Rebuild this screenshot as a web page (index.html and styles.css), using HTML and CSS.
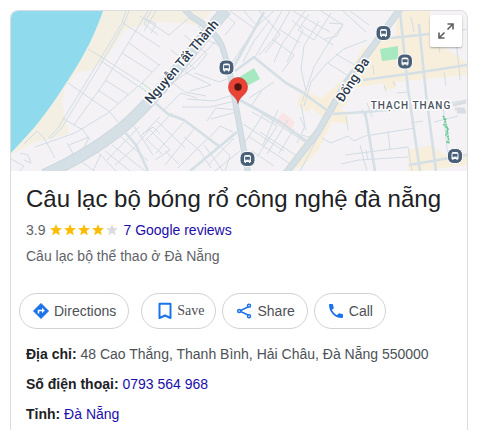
FILE: index.html
```html
<!DOCTYPE html>
<html lang="vi">
<head>
	<meta charset="UTF-8">
	<title>Câu lạc bộ bóng rổ công nghệ đà nẵng</title>
	<link rel="stylesheet" href="styles.css">
</head>
<body>
	<main class="place-card">
		<div class="map">
			<svg class="map-canvas" viewBox="11 11 456 160" preserveAspectRatio="xMidYMid slice" role="img" aria-label="Map">
				<defs>
					<g id="bus">
						<rect x="-7.500" y="-7.500" width="15" height="15" rx="6" fill="#4a6078" stroke="#fff" stroke-width="1"/>
						<path d="M-3.5 3V-2Q-3.5-4-1.5-4H1.5Q3.5-4 3.5-2V3H2.7V4H1.5V3H-1.5V4H-2.7V3Z" fill="#fff"/>
						<path d="M-2.3-2H2.3V.5H-2.3ZM-2.2 1.5h1M1.2 1.5h1" fill="#4a6078" stroke="#4a6078" stroke-width=".4"/>
					</g>
				</defs>
				<rect x="11" y="11" width="456" height="160" fill="#f4f2f4"/>

				<!-- beach and sea -->
				<path d="M103 11H212L199 25L180 23L155 22L125 30L115 45L103 62L92 70L76 73L65 88L62 103L69 134L33 143L11 155Z" fill="#f4efe3"/>
				<path d="M11 11H103C95 34 85 54 72 74C60 93 48 111 33 129L11 153Z" fill="#90daee"/>

				<!-- commercial blocks -->
				<g fill="#f7efdc">
					<path d="M396 11H430V40L461 58L467 64V75L395 82L350 88L348 102L328 119L315 108L303 91L322 98L348 75L362 49L373 43L396 36Z"/>
					<path d="M303 90L346 112L349 124L332 122L318 151L303 166L290 171L288 164L306 139L325 119L300 99Z"/>
					<path d="M408 150L432 145L444 155L467 153V165L420 171H408Z"/>
					<path d="M300 94L310 101V113L297 105ZM383 80L396 78V88L385 90Z"/>
				</g>
				<path d="M283 112L295 122L290 131L276 122Z" fill="#fae4e5"/>
				<path d="M238 78L254 68L260 79L245 87ZM380 49L398 46V59L382 61Z" fill="#a6e8c0"/>

				<!-- side streets -->
				<g fill="none" stroke="#d2dce4" stroke-width="1">
					<path d="M126 11L122 23L99 61L58 128L48 138M129 11L124 24L102 62L61 129L50 139"/>
					<path d="M148 11L122 53L104 83L74 125M88 49L103 58L140 82M101 61L138 86L108 113L75 133L35 147M123 23L160 47M129 43L159 65M122 53L152 72M105 80L129 95M98 90L119 104M68 83L110 112L118 122M62 118L83 130L90 140"/>
					<path d="M160 64L140 85M144 18L156 24L151 33M156 11L144 31M24 144L37 131L44 138L55 158M20 153L28 155L31 163L24 160M11 159L24 166L20 171M67 143L75 157M69 145L89 137L84 148M93 147L116 171M101 154L93 171M105 151L130 171M112 145L145 171M120 136L148 161M134 126L153 155M139 127L107 160M151 128L132 150L115 165M82 162L94 171"/>
					<path d="M140 137L160 117M142 134L153 127L160 134M146 139L162 154M156 120L185 148M149 129L170 150L155 160M165 151L179 164M172 113L145 141M184 122L156 153M194 129L165 165M207 139L178 168M184 137L200 151L211 168M204 145L223 171M219 145L230 156L225 171M233 132L220 126L210 137M234 138L208 165M240 151L215 171"/>
					<path d="M140 16L169 35L190 17M151 11L144 24L158 35M171 50L194 68L175 81M184 35L207 54L194 70M198 25L209 41L223 47M217 40L209 48L185 72L211 85L190 91M163 76L185 92L206 96M195 73L219 82L227 79M187 99L214 101L236 94M182 107L210 107L235 101M207 121L216 108L237 110M211 119L240 111M163 111L181 93L197 98"/>
					<path d="M221 11L235 23L225 35M230 11L255 29L229 67M244 11L257 26L274 11M270 20L254 41L243 62M259 11L280 34L265 53M282 11L255 57M290 11L274 39L259 55M279 29L300 43M272 39L294 55L282 72M292 20L303 30L287 62M305 11L282 44L274 62M319 21L304 46L301 69L306 91"/>
					<path d="M293 11L330 32M301 25L333 45M309 14L298 30L314 40L331 13M321 11L343 25L329 42M329 23L343 24L337 36L325 39M343 11L366 32M350 11L369 25M331 39L314 67L302 102M367 40L344 49L326 64L311 82L304 106M328 63L350 77M336 54L363 70M301 104L305 126L297 143M300 117L306 130M302 135L315 139"/>
					<path d="M249 98L274 82M252 105L262 90M252 112L277 126L257 157M265 112L245 142M278 110L263 145M288 120L267 154M294 129L279 153M243 124L284 151M248 136L289 163M260 132L300 158M252 151L274 166M258 111L305 142"/>
					<path d="M322 138L331 143L348 136L354 141L365 136L415 128M300 171L318 137M348 130L346 116M362 109L366 119M367 103L372 117M374 102L377 112M388 131L390 150M345 155L408 147L412 171M341 164L359 160L408 157M374 75L373 65M411 17L414 32M431 35L467 29M436 34L440 53M455 33L459 67L460 80M444 72L446 86M397 93L408 92M393 81L395 86M384 85L386 91M360 145L367 171M411 123L423 121M434 122L458 116M424 107L467 100M366 150L368 160M443 104L447 149L450 159"/>
					<path d="M457 112H466M455 109H465M453 105L466 102" stroke="#d9dde2" stroke-width="3"/>
				</g>

				<!-- main roads -->
				<g fill="none" stroke="#ccd7df" stroke-linejoin="round">
					<path d="M44 175Q98 150 130 121Q159 93 184 61L226 10" stroke-width="12"/>
					<path d="M286 173L318 132L346 83L401 8" stroke-width="7"/>
					<path d="M184 9L192 17Q213 28 222 46L229 69L235 101L240 129L248 173" stroke-width="6"/>
				</g>
				<g fill="none" stroke="#d5dfe6" stroke-linejoin="round">
					<path d="M44 175Q98 150 130 121Q159 93 184 61L226 10" stroke-width="10"/>
					<path d="M286 173L318 132L346 83L401 8" stroke-width="5"/>
					<path d="M184 9L192 17Q213 28 222 46L229 69L235 101L240 129L248 173" stroke-width="4"/>
					<path d="M123 130L136 145L148 171M153 101L168 114L184 120L196 129L220 147M190 171L237 132M235 71L254 57L266 67L286 83L302 92L332 114L365 112L411 108M238 99L280 122L312 145" stroke-width="2.6"/>
					<path d="M400 11L408 89L420 171M419 24L426 94L436 171M363 80L422 72L467 65M365 111L375 171M391 38L429 34M234 66L264 12M409 165L467 155" stroke-width="2.6"/>
				</g>

				<path d="M142 83L151 90M139 86L148 93" fill="none" stroke="#7bcda3" stroke-dasharray="1 1"/>
				<path d="M443 116L446 120L444 125L448 129L446 135L449 138L447 143M444 118L447 127L449 144" fill="none" stroke="#62c991" stroke-width="1.6" stroke-dasharray="2 1"/>

				<g class="map-labels">
					<text x="182" y="66" transform="rotate(-49.5 182 62)">Nguyễn Tất Thành</text>
					<text x="353" y="84" transform="rotate(-57 353 80)">Đống Đa</text>
					<text class="district" x="411" y="109">THẠCH THANG</text>
				</g>

				<use href="#bus" x="226.500" y="67.500"/>
				<use href="#bus" x="247.500" y="159"/>
				<use href="#bus" x="383.500" y="33"/>
				<use href="#bus" x="405" y="61.500"/>
				<use href="#bus" x="455" y="156"/>

				<path d="M238 103.500C237 96 228.500 95 228.500 87A9.500 9.500 0 0 1 247.500 87C247.500 95 239 96 238 103.500Z" fill="#ea4335" stroke="#c5362b" stroke-width=".6"/>
				<circle cx="238" cy="87" r="3.700" fill="#541412"/>
			</svg>
			<button class="expand" aria-label="Expand map">
				<svg viewBox="0 0 16 16" width="16" height="16" fill="none" stroke="#5f5f5f" stroke-width="1.600"><path d="M9.500 1H15V6.500M15 1L9.500 6.500M6.500 15H1V9.500M1 15L6.500 9.500"/></svg>
			</button>
		</div>

		<header class="summary">
			<h1>Câu lạc bộ bóng rổ công nghệ đà nẵng</h1>
			<div class="rating">
				<span>3.9</span>
				<svg class="stars" viewBox="0 0 70 14" width="70" height="14" role="img" aria-label="3.9 / 5">
					<defs><path id="star" d="M7 1L8.600 5.100L13 5.300L9.600 8L10.800 12.300L7 9.900L3.200 12.300L4.400 8L1 5.300L5.400 5.100Z"/></defs>
					<g fill="#fbbc04">
						<use href="#star"/>
						<use href="#star" x="14"/>
						<use href="#star" x="28"/>
						<use href="#star" x="42"/>
					</g>
					<use href="#star" x="56" fill="#dadce0"/>
				</svg>
				<a href="#reviews">7 Google reviews</a>
			</div>
			<p class="category">Câu lạc bộ thể thao ở Đà Nẵng</p>
		</header>

		<div class="actions">
			<button class="action directions">
				<svg viewBox="0 0 18 18" width="18" height="18"><path d="M9 1.500L16.500 9L9 16.500L1.500 9Z" fill="#1a73e8" stroke="#1a73e8" stroke-linejoin="round"/><path d="M6.500 11.500V8.500H10.500" fill="none" stroke="#fff" stroke-width="1.500"/><path d="M10 5.700L12.800 8.500L10 11.300Z" fill="#fff"/></svg>
				Directions
			</button>
			<button class="action save">
				<svg viewBox="0 0 18 18" width="18" height="18"><path d="M4.500 1.800H15.500V16L10 13.500L4.500 16Z" fill="none" stroke="#1a73e8" stroke-width="2" stroke-linejoin="round"/></svg>
				Save
			</button>
			<button class="action">
				<svg viewBox="0 0 18 18" width="18" height="18" fill="none" stroke="#1a73e8" stroke-width="1.500"><path d="M14 4.500L4.500 9L14 13.500"/><g fill="#fff"><circle cx="14" cy="3.700" r="1.500"/><circle cx="4.200" cy="9" r="1.500"/><circle cx="14" cy="14.300" r="1.500"/></g></svg>
				Share
			</button>
			<button class="action">
				<svg viewBox="0 0 18 18" width="18" height="18"><path d="M2 2.800Q2 2 2.800 2H5.300Q6 2 6.100 2.700Q6.200 4.200 6.700 5.600Q6.800 6.100 6.500 6.400L4.800 8.100Q6.700 11.500 9.900 13.200L11.600 11.500Q11.900 11.200 12.400 11.300Q13.700 11.800 15.300 11.900Q16 12 16 12.700V15.200Q16 16 15.200 16Q9.700 16 5.850 12.150Q2 8.300 2 2.800Z" fill="#1a73e8"/></svg>
				Call
			</button>
		</div>

		<div class="details">
			<p><b>Địa chỉ:</b> 48 Cao Thắng, Thanh Bình, Hải Châu, Đà Nẵng 550000</p>
			<p><b>Số điện thoại:</b> <a href="tel:0793564968">0793 564 968</a></p>
			<p><b>Tỉnh:</b> <a href="#da-nang">Đà Nẵng</a></p>
		</div>
	</main>
</body>
</html>
```

FILE: styles.css
```css
* {
	box-sizing: border-box;
}

body {
	margin: 0;
	padding: 10px 9px 0 10px;
	background: white;
	color: #4d5156;
	font: 14px/20px "Liberation Sans", Arial, sans-serif;
}

h1, p {
	margin: 0;
}

a {
	color: #1a0dab;
	text-decoration: none;
}

.place-card {
	min-height: calc(100vh - 10px);
	border: 1px solid #dadce0;
	border-bottom: 0;
	border-radius: 8px 8px 0 0;
	overflow: hidden;
}

/**
 * Map
 */
.map {
	position: relative;
	height: 160px;
}

.map-canvas {
	display: block;
	width: 100%;
	height: 100%;
}

.map-labels {
	fill: #29394d;
	stroke: white;
	stroke-width: 3px;
	stroke-linejoin: round;
	paint-order: stroke;
	text-anchor: middle;
	font: 500 13px Roboto, sans-serif;
}

.map-labels .district {
	fill: #4b535e;
	font-size: 10px;
	letter-spacing: 1px;
}

.expand {
	position: absolute;
	top: 4px; right: 5px;
	display: grid;
	place-items: center;
	width: 32px;
	height: 32px;
	padding: 0;
	border: 0;
	border-radius: 2px;
	background: white;
	box-shadow: 0 1px 2px rgba(0,0,0,.3);
	cursor: pointer;
}

/**
 * Name, rating and category
 */
.summary {
	padding: 12px 15px 0;
}

.summary h1 {
	color: #202124;
	font-size: 24px;
	font-weight: normal;
	line-height: 32px;
}

.rating {
	display: flex;
	align-items: center;
	gap: 4px;
	margin-top: 5px;
	color: #5f6368;
}

.category {
	margin-top: 6px;
	color: #5f6368;
}

/**
 * Action buttons
 */
.actions {
	display: flex;
	flex-wrap: wrap;
	gap: 6px;
	padding: 27px 8px 0;
}

.action {
	display: flex;
	align-items: center;
	gap: 4px;
	height: 36px;
	padding: 0 12px;
	border: 1px solid #d2d2d2;
	border-radius: 18px;
	background: white;
	color: #4d5156;
	font: inherit;
	cursor: pointer;
}

.directions {
	margin-right: 6px;
}

.save {
	padding: 0 11px 0 13px;
	font-family: "Liberation Serif", serif;
}

/**
 * Contact details
 */
.details {
	display: grid;
	gap: 10px;
	padding: 15px 15px 0;
}

.details b {
	color: #202124;
}
```
